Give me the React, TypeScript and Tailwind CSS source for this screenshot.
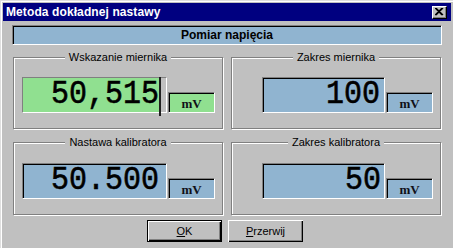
import React from "react";

const sunken =
  "border border-t-[#808080] border-l-[#808080] border-b-white border-r-white shadow-[inset_1px_1px_0_#000]";

const digits =
  "font-['Liberation_Mono'] text-[30px] leading-none scale-y-[1.12] origin-bottom text-black [-webkit-text-stroke:0.5px_#000]";

function Group({
  label,
  className,
  children,
}: {
  label: string;
  className?: string;
  children: React.ReactNode;
}) {
  return (
    <div
      className={
        "relative border border-[#808080] shadow-[inset_1px_1px_0_#fff,1px_1px_0_#fff] flex items-end justify-end " +
        (className ?? "")
      }
    >
      <div className="absolute left-0 right-0 top-[-8px] flex justify-center">
        <span className="bg-[#c0c0c0] px-[4px] text-[11px] leading-[14px] text-black">
          {label}
        </span>
      </div>
      {children}
    </div>
  );
}

function Unit({ bg }: { bg: string }) {
  return (
    <div
      className={
        sunken +
        " h-[21px] w-[47px] flex items-center justify-center font-['Liberation_Serif'] font-bold text-[13px] leading-none text-[#101018] pt-[1px] " +
        bg
      }
    >
      mV
    </div>
  );
}

export default function App() {
  return (
    <div className="w-[453px] h-[248px] bg-[#c0c0c0] overflow-hidden font-['Liberation_Sans',Arial,sans-serif] relative shadow-[inset_1px_1px_0_#dfdfdf,inset_2px_2px_0_#fff]">
      {/* title bar */}
      <div className="ml-[3px] mr-[2px] mt-[3px] h-[18px] bg-[#000080] flex items-center justify-between pl-[3px] pr-[4px]">
        <span className="text-white font-bold text-[12px] leading-none tracking-[0.1px]">
          Metoda dokładnej nastawy
        </span>
        <div className="w-[15px] h-[13px] bg-[#c0c0c0] border border-t-white border-l-white border-b-black border-r-black shadow-[inset_-1px_-1px_0_#808080] flex items-center justify-center">
          <svg width="9" height="8" viewBox="0 0 9 8">
            <path d="M1 0 L8 7 M0 0 L7 7 M8 0 L1 7 M7 0 L0 7" stroke="#000" strokeWidth="1.2" />
          </svg>
        </div>
      </div>

      {/* header */}
      <div
        className={
          "ml-[12px] mt-[4px] w-[430px] h-[20px] bg-[#90b4d0] flex items-center justify-center " +
          sunken
        }
      >
        <span className="font-bold text-[12px] leading-none text-black">Pomiar napięcia</span>
      </div>

      {/* row 1 */}
      <div className="flex ml-[13px] mt-[12px] gap-[8px]">
        <Group label="Wskazanie miernika" className="w-[210px] h-[72px] pr-[7px] pb-[15px]">
          <div className={"relative h-[36px] w-[145px] flex " + sunken}>
            <div className="flex-1 bg-[#90e090] flex items-end justify-end pr-[1px] pb-[1px]">
              <span className={digits}>50,515</span>
            </div>
            <div className="w-[6px] bg-[#c0c0c0]" />
            <div className="absolute left-[136px] top-[-1px] w-[2px] h-[39px] bg-[#202020]" />
          </div>
          <div className="w-[1px]" />
          <Unit bg="bg-[#90e090]" />
        </Group>
        <Group label="Zakres miernika" className="w-[210px] h-[72px] pr-[7px] pb-[15px]">
          <div className={"h-[36px] w-[123px] bg-[#90b4d0] flex items-end justify-end pr-[4px] pb-[1px] " + sunken}>
            <span className={digits}>100</span>
          </div>
          <div className="w-[1px]" />
          <Unit bg="bg-[#90b4d0]" />
        </Group>
      </div>

      {/* row 2 */}
      <div className="flex ml-[13px] mt-[13px] gap-[8px]">
        <Group label="Nastawa kalibratora" className="w-[210px] h-[73px] pr-[7px] pb-[15px]">
          <div className={"h-[36px] w-[145px] bg-[#90b4d0] flex items-end justify-end pr-[7px] pb-[1px] " + sunken}>
            <span className={digits}>50.500</span>
          </div>
          <div className="w-[1px]" />
          <Unit bg="bg-[#90b4d0]" />
        </Group>
        <Group label="Zakres kalibratora" className="w-[210px] h-[73px] pr-[7px] pb-[15px]">
          <div className={"h-[36px] w-[123px] bg-[#90b4d0] flex items-end justify-end pr-[3px] pb-[1px] " + sunken}>
            <span className={digits}>50</span>
          </div>
          <div className="w-[1px]" />
          <Unit bg="bg-[#90b4d0]" />
        </Group>
      </div>

      {/* buttons */}
      <div className="flex ml-[147px] mt-[5px] gap-[6px]">
        <button className="w-[75px] h-[22px] bg-[#c0c0c0] border border-black shadow-[inset_1px_1px_0_#fff,inset_-1px_-1px_0_#000,inset_-2px_-2px_0_#808080] text-[11px] text-black flex items-center justify-center">
          <span>
            <span className="underline">O</span>K
          </span>
        </button>
        <button className="w-[75px] h-[22px] bg-[#c0c0c0] shadow-[inset_1px_1px_0_#fff,inset_-1px_-1px_0_#000,inset_-2px_-2px_0_#808080] text-[11px] text-black flex items-center justify-center">
          <span>
            <span className="underline">P</span>rzerwij
          </span>
        </button>
      </div>
    </div>
  );
}
